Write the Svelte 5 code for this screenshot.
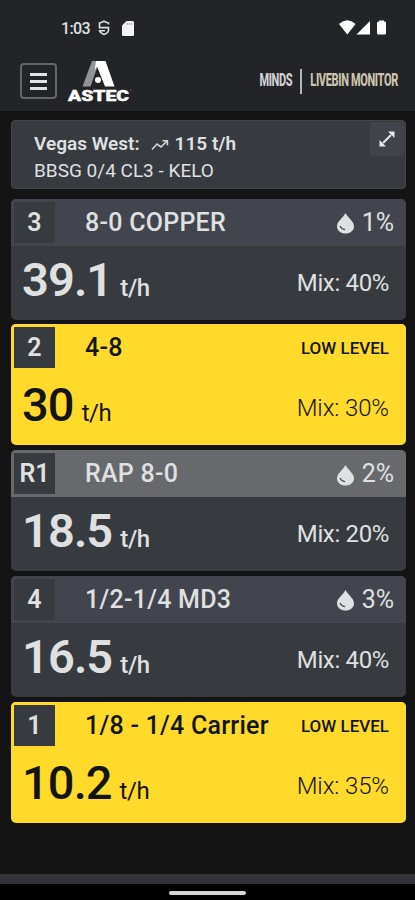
<script lang="ts">
	type Bin = {
		id: string;
		name: string;
		rate: string;
		mix: number;
		moisture?: number;
		low?: boolean;
		recycled?: boolean;
	};

	const bins: Bin[] = [
		{ id: '3', name: '8-0 COPPER', rate: '39.1', mix: 40, moisture: 1 },
		{ id: '2', name: '4-8', rate: '30', mix: 30, low: true },
		{ id: 'R1', name: 'RAP 8-0', rate: '18.5', mix: 20, moisture: 2, recycled: true },
		{ id: '4', name: '1/2-1/4 MD3', rate: '16.5', mix: 40, moisture: 3 },
		{ id: '1', name: '1/8 - 1/4 Carrier', rate: '10.2', mix: 35, low: true }
	];
</script>

<div class="screen">
	<header>
		<div class="status-bar">
			<span class="time">1:03</span>
			<svg class="vpn" width="12" height="16" viewBox="0 0 12 16" fill="none" stroke="#dededf" stroke-width="1.6">
				<path d="M10.5 4.6V3Q8 2.6 6 1.2Q4 2.6 1.5 3V7.6H10.5V10C10.5 12.4 8.5 13.7 6 14.6C3.5 13.7 1.9 12.6 1.5 10.7H7" />
			</svg>
			<svg class="card-icon" width="12" height="15" viewBox="0 0 12 15">
				<path fill="#f3f3f3" d="M4.5 0H10.5Q12 0 12 1.5V13.5Q12 15 10.5 15H1.5Q0 15 0 13.5V4.5Z" />
				<path stroke="#a8a8aa" d="M5 2v2M7.3 2v2M9.6 2v2" />
			</svg>
			<svg class="signals" width="49" height="16" viewBox="0 0 49 16" fill="#fff">
				<path d="M0 4Q8.3-3.4 16.6 4L8.3 14.5Z" />
				<path d="M31 1V14.5H17.5Z" />
				<path d="M40 1.5V.5h5v1h1Q47 1.5 47 3V13Q47 14.5 45.5 14.5H39.5Q38 14.5 38 13V3Q38 1.5 39.5 1.5Z" />
			</svg>
		</div>

		<div class="nav">
			<button class="menu" aria-label="Menu">
				<span></span>
				<span></span>
				<span></span>
			</button>
			<svg class="logo" width="70" height="49" viewBox="-2 -4 70 49">
				<path fill="#929394" d="M24 0H31.5L22.5 25.5H14.5Z" />
				<path fill="#fff" d="M28 0H37.5L46.5 25.5H37L29 5.5L26.7 9Z" />
				<circle cx="30" cy="19" r="3" fill="#fff" />
				<text x="0" y="39.5" textLength="61" lengthAdjust="spacingAndGlyphs">ASTEC</text>
				<circle cx="62.7" cy="29" r=".6" fill="#77787b" />
			</svg>
			<div class="brand">
				<span class="brand-name">MINDS</span>
				<span class="divider"></span>
				<span class="brand-name product">LIVEBIN MONITOR</span>
			</div>
		</div>
	</header>

	<main>
		<section class="summary">
			<div class="summary-text">
				<div class="plant">
					<span class="plant-name">Vegas West:</span>
					<svg width="18" height="12" viewBox="0 0 18 12" fill="none" stroke="#d5d6d8" stroke-width="1.6">
						<path d="M1 10.5L6 5L10 8L16 2" />
						<path d="M11.5 1.7H16.4V6.3" />
					</svg>
					<span>115 t/h</span>
				</div>
				<div class="recipe">BBSG 0/4 CL3 - KELO</div>
			</div>
			<button class="expand" aria-label="Expand">
				<svg width="16" height="16" viewBox="0 0 16 16">
					<path d="M4 12L12 4" stroke="#e9e9ec" stroke-width="2" />
					<path fill="#e9e9ec" d="M9 .5H15.5V7ZM.5 9V15.5H7Z" />
				</svg>
			</button>
		</section>

		<div class="bins">
			{#each bins as bin (bin.id)}
				<article class="bin" class:low={bin.low} class:recycled={bin.recycled}>
					<div class="bin-header">
						<span class="bin-id">{bin.id}</span>
						<span class="bin-name">{bin.name}</span>
						{#if bin.low}
							<span class="alert">LOW LEVEL</span>
						{:else}
							<span class="moisture">
								<svg width="17" height="21" viewBox="0 0 17 21">
									<path fill="#dfe0e1" d="M8.5 0C11 5 17 8.4 17 13.2C17 17.8 13.2 20.5 8.5 20.5S0 17.8 0 13.2C0 8.4 6 5 8.5 0Z" />
									<path d="M3 13Q4.4 16.2 8 16.7" fill="none" stroke="#484a52" stroke-width="1.2" />
								</svg>
								<span>{bin.moisture}%</span>
							</span>
						{/if}
					</div>
					<div class="bin-body">
						<span class="rate">{bin.rate}</span>
						<span class="unit">t/h</span>
						<span class="mix">Mix: {bin.mix}%</span>
					</div>
				</article>
			{/each}
		</div>
	</main>

	<footer>
		<div class="toolbar-edge"></div>
		<div class="gesture-bar"><span></span></div>
	</footer>
</div>

<style>
	:global(body) {
		background: #141414;
	}

	.screen {
		display: flex;
		flex-direction: column;
		width: 415px;
		height: 900px;
		overflow: hidden;
		background: #141414;
		color: #dfe0e1;
		font-family: Roboto, "Liberation Sans", sans-serif;
	}

	header {
		height: 111px;
		flex: none;
		background: #232428;
	}

	button {
		border: 0;
		padding: 0;
		background: none;
	}

	/* Status bar */
	.status-bar {
		display: flex;
		align-items: center;
		height: 56px;
		padding: 0 27px 0 61px;
	}

	.time {
		width: 37px;
		font-size: 16px;
		font-weight: 500;
		letter-spacing: -.6px;
	}

	.card-icon {
		margin-left: 12px;
	}

	.signals {
		margin-left: auto;
	}

	/* Logo row */
	.nav {
		display: flex;
		align-items: center;
		height: 50px;
		padding: 0 17px 0 20px;
	}

	.menu {
		display: flex;
		flex-direction: column;
		align-items: center;
		justify-content: center;
		gap: 4px;
		box-sizing: border-box;
		width: 37px;
		height: 36px;
		border: 2px solid #65666a;
		border-radius: 4px;
	}

	.menu span {
		width: 17px;
		height: 3px;
		background: #e2e2e3;
	}

	.logo {
		margin-left: 9px;
	}

	.logo text {
		font: 900 15px Roboto, sans-serif;
		fill: #fff;
		stroke: #fff;
		stroke-width: .4px;
	}

	.brand {
		display: flex;
		align-items: center;
		margin-left: auto;
	}

	/* Small type stretched upwards gives the condensed poster look */
	.brand-name {
		color: #d0d0d2;
		font-size: 11px;
		font-weight: 800;
		line-height: 14px;
		letter-spacing: -.35px;
		white-space: nowrap;
		transform: scaleY(1.75);
	}

	.brand-name.product {
		color: #cdc5ae;
	}

	.divider {
		width: 2px;
		height: 25px;
		margin: 0 8px;
		background: #b5b5b6;
	}

	main {
		flex: 1;
		padding: 9px 9px 0 11px;
	}

	/* Plant summary */
	.summary {
		display: flex;
		justify-content: space-between;
		box-sizing: border-box;
		height: 69px;
		border: 1px solid #44464b;
		border-radius: 4px;
		background: #373a3f;
	}

	.summary-text {
		padding: 9px 0 0 22px;
		line-height: 27px;
	}

	.plant {
		display: flex;
		align-items: center;
		font-size: 19px;
		font-weight: 600;
	}

	.plant svg {
		margin: 2px 6px 0 11px;
	}

	.recipe {
		font-size: 19px;
	}

	.expand {
		display: flex;
		align-items: center;
		justify-content: center;
		width: 34px;
		height: 34px;
		margin: 1px 1px 0 0;
		border-radius: 3px;
		background: #41434b;
	}

	/* Bin cards */
	.bins {
		display: flex;
		flex-direction: column;
		gap: 4.75px;
		margin-top: 9.6px;
	}

	.bin {
		height: 121px;
		border-radius: 5px;
		background: #373a3f;
		overflow: hidden;
	}

	.bin-header {
		display: flex;
		align-items: center;
		height: 47px;
		background: #43454e;
	}

	.bin-id {
		width: 41px;
		height: 41px;
		margin-left: 3px;
		background: #373a3f;
		font-size: 25px;
		font-weight: 600;
		line-height: 41px;
		text-align: center;
	}

	.bin-name {
		margin-left: 30px;
		font-size: 25px;
		font-weight: 500;
		letter-spacing: .25px;
	}

	.moisture {
		display: flex;
		align-items: center;
		gap: 8px;
		margin: 0 12px 0 auto;
		font-size: 25px;
	}

	.moisture svg {
		margin-top: 3px;
	}

	.alert {
		margin: 1px 17px 0 auto;
		font-size: 17px;
		font-weight: 500;
	}

	.bin-body {
		display: flex;
		align-items: baseline;
		padding: 6px 17px 0 11px;
	}

	.rate {
		font-size: 47px;
		font-weight: 600;
		letter-spacing: -.9px;
	}

	.unit {
		margin-left: 8px;
		font-size: 24px;
		font-weight: 500;
		letter-spacing: -.4px;
	}

	.mix {
		margin-left: auto;
		font-size: 24px;
		letter-spacing: -.35px;
		transform: translateY(-5px);
	}

	.bin.recycled .bin-header {
		background: #68696d;
	}

	.bin.low,
	.bin.low .bin-header {
		background: #ffda2a;
		color: #131515;
	}

	.bin.low .bin-id {
		color: #dfe0e1;
	}

	.bin.low .rate {
		font-weight: 500;
	}

	.bin.low .unit {
		font-weight: 400;
	}

	.bin.low .mix {
		font-weight: 300;
		letter-spacing: -.1px;
	}

	/* Bottom system area */
	footer {
		flex: none;
	}

	.toolbar-edge {
		height: 10px;
		background: #323338;
	}

	.gesture-bar {
		display: flex;
		justify-content: center;
		height: 16px;
		padding-top: 7px;
		box-sizing: border-box;
		background: #000;
	}

	.gesture-bar span {
		width: 77px;
		height: 4px;
		border-radius: 2px;
		background: #d6d4d8;
	}
</style>
